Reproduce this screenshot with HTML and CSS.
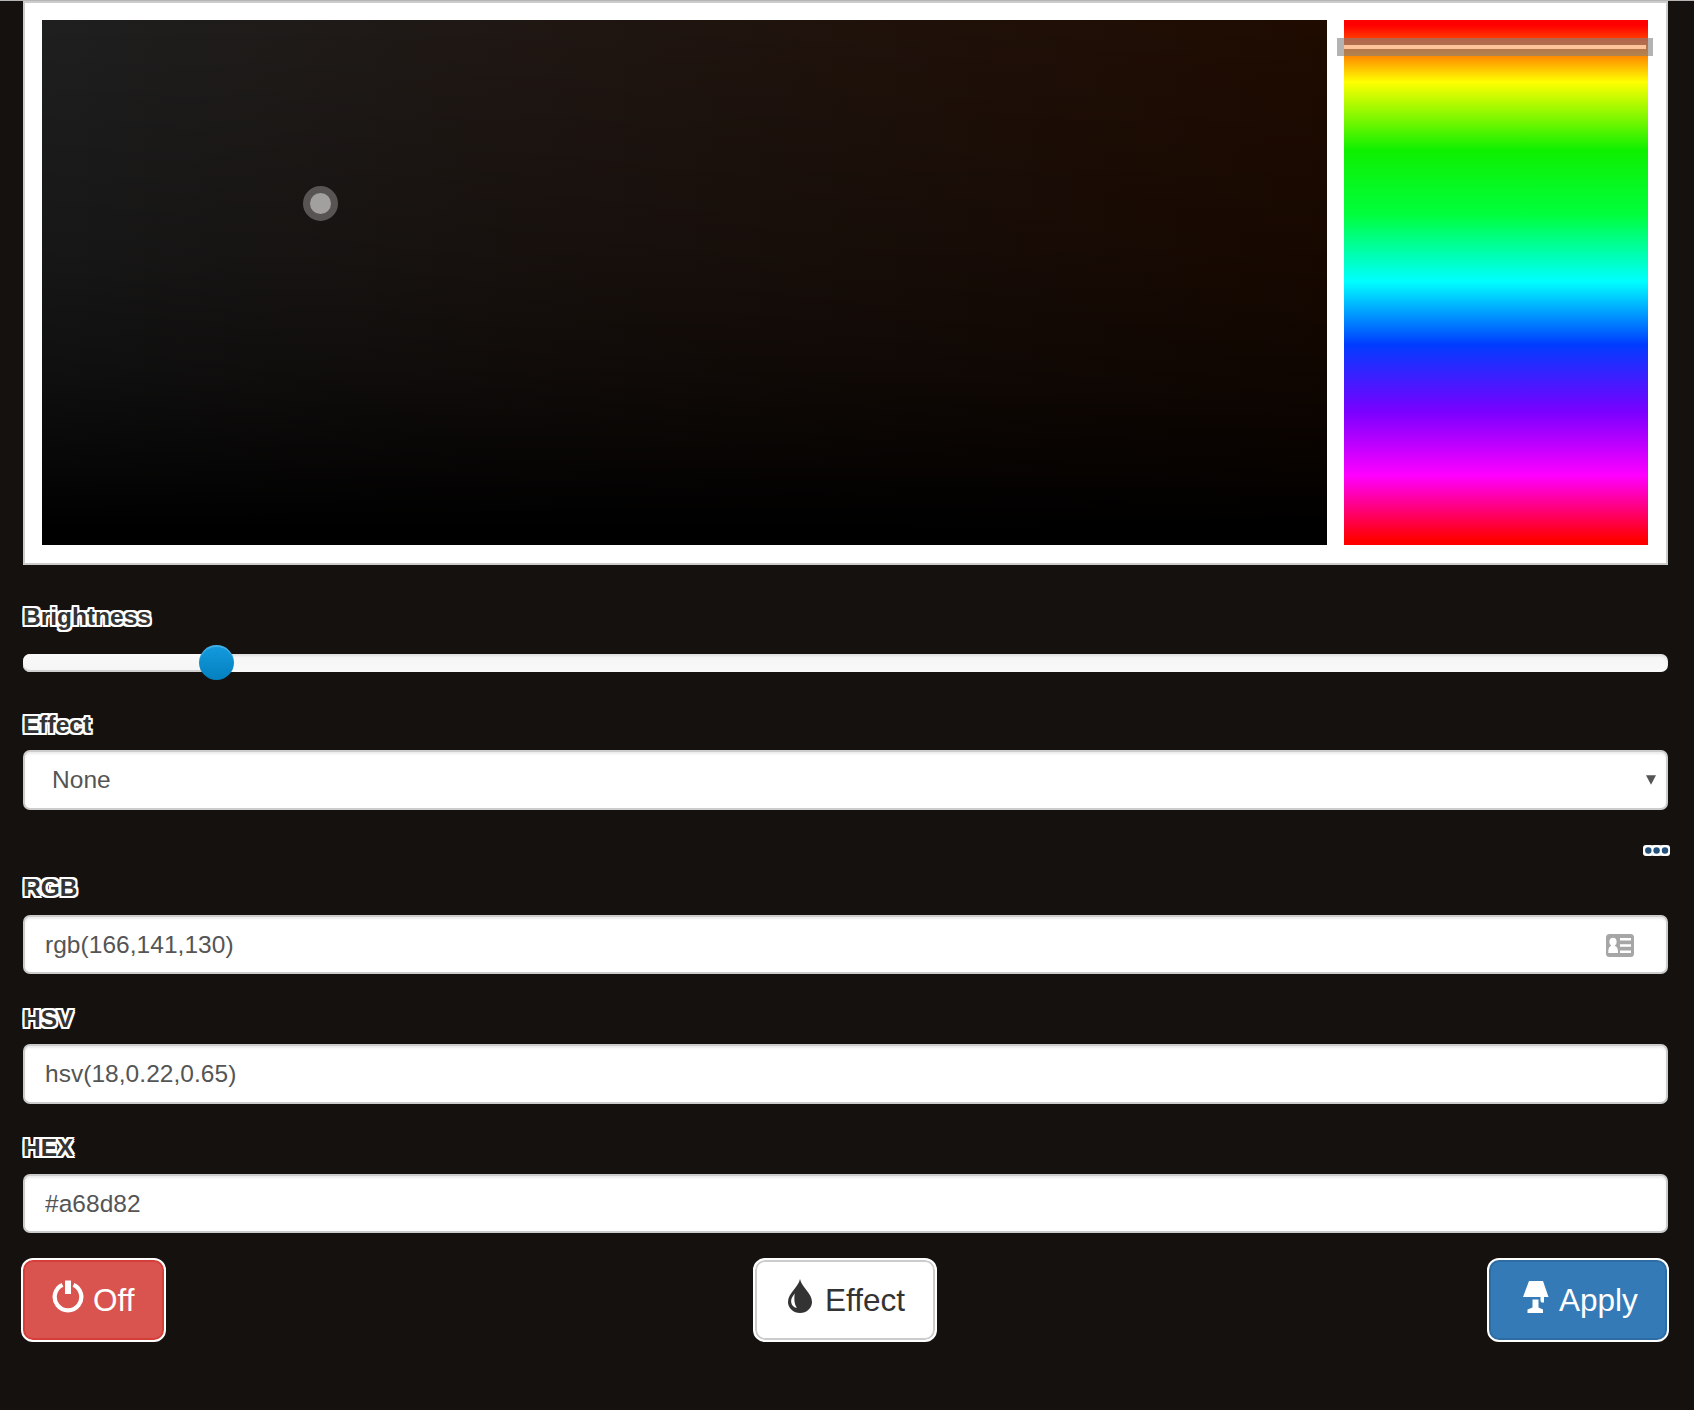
FILE: index.html
```html
<!DOCTYPE html>
<html lang="en">
<head>
<meta charset="utf-8">
<title>Light control</title>
<link rel="stylesheet" href="styles.css">
</head>
<body>
<main class="page">
  <section class="picker">
    <div class="saturation"><span class="sat-marker"></span></div>
    <div class="hue"><span class="hue-marker"><span class="hue-line"></span></span></div>
  </section>

  <div class="group group-brightness">
    <label class="label">Brightness</label>
    <div class="slider"><span class="slider-fill"></span><span class="slider-handle"></span></div>
  </div>

  <div class="group group-effect">
    <label class="label" for="effect">Effect</label>
    <div class="field">
      <select class="control select" id="effect"><option>None</option></select>
      <svg class="caret" width="10" height="10" viewBox="0 0 10 10"><path d="M0 .3h10L5 9.7z" fill="#555"/></svg>
    </div>
  </div>

  <div class="more">
    <svg width="27" height="12" viewBox="0 0 27 12"><g fill="#fff"><rect width="10.5" height="11" rx="3"/><rect x="8" width="11" height="11" rx="3"/><rect x="16.5" width="10.5" height="11" rx="3"/></g><g fill="#23527c"><circle cx="5.3" cy="5.5" r="3.2"/><circle cx="13.6" cy="5.5" r="3.2"/><circle cx="22" cy="5.5" r="3.2"/></g></svg>
  </div>

  <div class="group">
    <label class="label" for="rgb">RGB</label>
    <div class="field">
      <input class="control" id="rgb" type="text" value="rgb(166,141,130)">
      <svg class="card-icon" width="28" height="23" viewBox="0 0 28 23"><rect width="28" height="23" rx="3.5" fill="#a6a6a6"/><g fill="#fff"><ellipse cx="7" cy="7.8" rx="3.6" ry="4"/><path d="M5 10h4v2c2 .5 3 2.5 3 7H2.300c0-4.500.9-6.500 2.700-7z"/><path d="M14 4h11v2.500H14zM14 10.300h11v2.500H14zM14 16.500h11V19H14z"/></g></svg>
    </div>
  </div>
  <div class="group group-hsv">
    <label class="label" for="hsv">HSV</label>
    <input class="control control-tall" id="hsv" type="text" value="hsv(18,0.22,0.65)">
  </div>
  <div class="group group-hex">
    <label class="label" for="hex">HEX</label>
    <input class="control" id="hex" type="text" value="#a68d82">
  </div>

  <div class="actions">
    <button class="btn btn-off" type="button"><svg class="icon-off" width="32" height="33" viewBox="0 0 32 33"><path d="M10.500 4.900A13.300 13.300 0 1 0 21.500 4.900" fill="none" stroke="#fff" stroke-width="4.300"/><path d="M13 .5h6v13.500h-6z" fill="#fff"/></svg><span>Off</span></button>
    <button class="btn btn-effect" type="button"><svg class="icon-drop" width="24" height="34" viewBox="0 0 24 34"><path d="M12 0C13.500 8 24 14 24 23a12 11 0 0 1-24 0C0 14 10.500 8 12 0z" fill="#333"/><path d="M6.700 14.500C4.500 17.500 2.600 20 3.200 23.500c.6 3.300 3 5.200 5.800 5.300C7 26 5.700 22.500 6.700 14.500z" fill="#fff"/></svg><span>Effect</span></button>
    <button class="btn btn-apply" type="button"><svg class="icon-lamp" width="26" height="32" viewBox="0 0 26 32"><path d="M6 0h14l5.500 16H0zM17.500 15h3.500v6.500h-2.500l-1-1.500zM9.500 18.500h6v8l4.500 2V32H4.500v-3.500l5-2z" fill="#fff"/></svg><span>Apply</span></button>
  </div>
</main>
</body>
</html>
```
FILE: styles.css
```css
* { box-sizing: border-box; }

body {
  margin: 0;
  min-height: 1410px;
  border-top: 1px solid #b5b5b5;
  background: #15110e;
  color: #333;
  font-family: "Liberation Sans", Arial, sans-serif;
  font-size: 24.5px;
  line-height: 35px;
}

.page { padding: 0 26px 0 23px; }

.picker {
  display: flex;
  gap: 17px;
  height: 564px;
  padding: 17px 18px 18px 17px;
  border: 2px solid #ccc;
  background: #fff;
}

.saturation {
  position: relative;
  flex: 1;
  background:
    linear-gradient(to bottom, transparent, rgba(0,0,0,.28) 45%, rgba(0,0,0,.5) 67%, rgba(0,0,0,.77) 84%, #000 97%),
    linear-gradient(to right, #1e1f1f, #1f1713 36%, #1f0b00);
}

.sat-marker {
  position: absolute;
  left: 261px;
  top: 166px;
  width: 35px;
  height: 35px;
  border: 7px solid #575453;
  border-radius: 50%;
  background: #a2a09e;
}

.hue {
  position: relative;
  width: 304px;
  background: linear-gradient(to bottom, #f00 0%, #f00 1%, #ff0 11.8%, #0ef000 24.8%, #00ff3c 37%, #0ff 49.8%, #003cff 61.8%, #7a00ff 74.6%, #f0f 86.8%, #f00 99%);
}

.hue-marker {
  position: absolute;
  left: -7px;
  top: 18px;
  width: 316px;
  height: 18px;
  padding: 7px;
  background: rgba(128,128,128,.6);
}

.hue-line { display: block; height: 4px; background: #ffc499; }

.group-brightness { padding-top: 34px; }

.label {
  display: block;
  height: 44px;
  font-weight: bold;
  text-shadow:
    -2px -2px 0 #fff, 2px -2px 0 #fff, -2px 2px 0 #fff, 2px 2px 0 #fff,
    -2px 0 0 #fff, 2px 0 0 #fff, 0 -2px 0 #fff, 0 2px 0 #fff;
}

.slider {
  position: relative;
  height: 18px;
  margin-top: 11px;
  border-radius: 7px;
  background: linear-gradient(#f5f5f5, #f9f9f9);
  box-shadow: inset 0 2px 3px rgba(0,0,0,.1);
}

.slider-fill {
  display: block;
  width: 193px;
  height: 18px;
  border-radius: 7px;
  background: linear-gradient(#f9f9f9, #f5f5f5);
  box-shadow: inset 0 -2px 0 rgba(0,0,0,.15);
}

.slider-handle {
  position: absolute;
  left: 176px;
  top: -9px;
  width: 35px;
  height: 35px;
  border-radius: 50%;
  background: linear-gradient(#149bdf, #0480be);
  box-shadow: inset 0 2px 0 rgba(255,255,255,.2);
}

.group-effect { padding-top: 35px; }
.group-effect .label { height: 43px; }

.field { position: relative; }

.control {
  display: block;
  width: 100%;
  height: 59px;
  padding: 0 20px;
  border: 2px solid #ccc;
  border-radius: 7px;
  background: #fff;
  box-shadow: inset 0 2px 2px rgba(0,0,0,.075);
  color: #555;
  font: inherit;
  letter-spacing: .04px;
}

.control-tall { height: 60px; }

.select {
  height: 60px;
  padding: 0 27px 2px;
  appearance: none;
}

.caret { position: absolute; right: 12px; top: 25px; }

.more {
  display: flex;
  justify-content: flex-end;
  height: 60px;
  margin-right: -2px;
  padding-top: 35px;
}

.group .field:has(.card-icon) { margin-top: 1px; }

.card-icon { position: absolute; right: 34px; top: 19px; }

.group-hsv { padding-top: 27px; }
.group-hsv .label { height: 43px; }
.group-hex { padding-top: 26px; }

.actions {
  display: flex;
  margin: 25px -1px 0 -2px;
}

.btn {
  display: flex;
  height: 84px;
  padding: 0;
  border: 2px solid #fff;
  border-radius: 12px;
  color: #fff;
  font: 31.5px/42px "Liberation Sans", Arial, sans-serif;
}

.btn span { margin-top: 19px; }

.btn-off { width: 145px; background: #d9534f; box-shadow: inset 0 0 0 2px #d43f3a; }
.btn-effect { width: 184px; margin-left: 587px; background: #fff; box-shadow: inset 0 0 0 2px #ccc; color: #333; }
.btn-apply { width: 182px; margin-left: auto; background: #337ab7; box-shadow: inset 0 0 0 2px #2e6da4; }

.icon-off { margin: 20px 9px 0 29px; }
.icon-drop { margin: 19px 13px 0 33px; }
.icon-lamp { margin: 21px 10px 0 34px; }
```
